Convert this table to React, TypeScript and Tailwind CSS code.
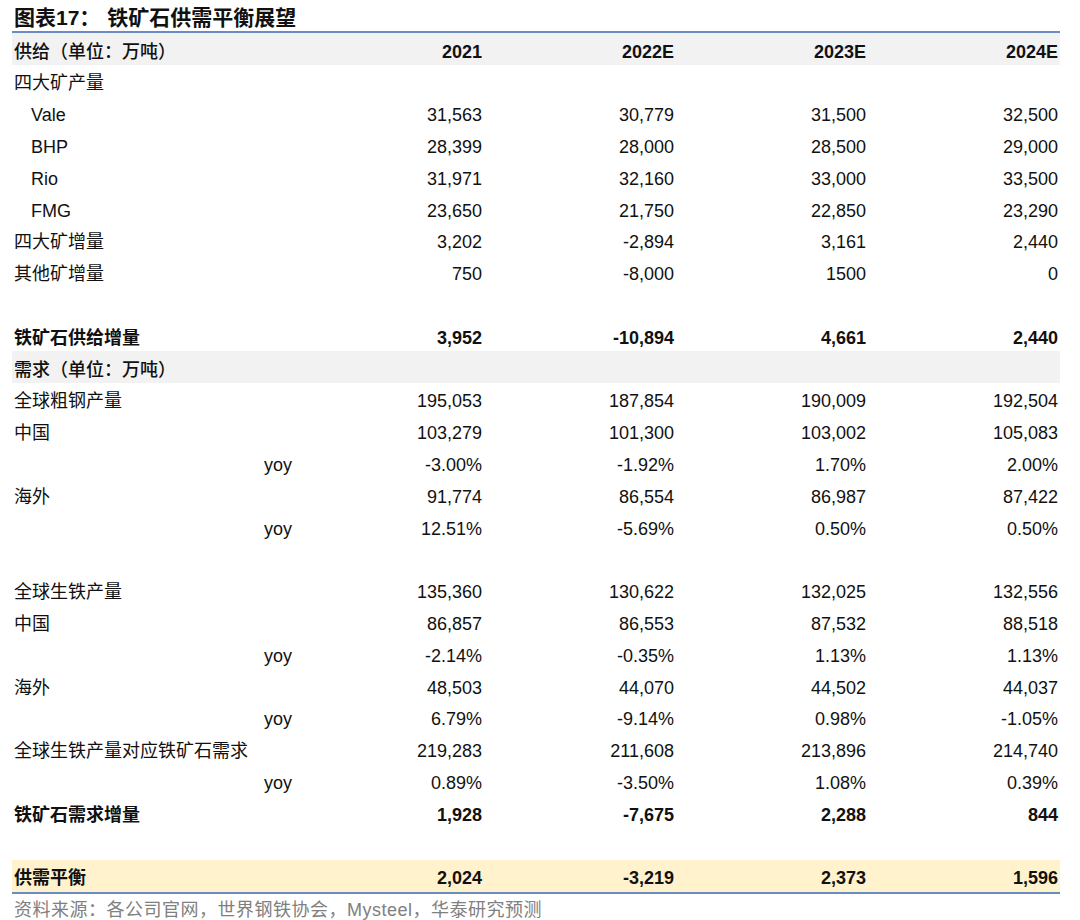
import React from 'react';

type Row = {
  label: string;
  vals?: string[];
  kind?: 'indent' | 'yoy';
  bold?: boolean;
  band?: 'gray' | 'yellow';
};

const rows: Row[] = [
  { label: '四大矿产量' },
  { label: 'Vale', kind: 'indent', vals: ['31,563', '30,779', '31,500', '32,500'] },
  { label: 'BHP', kind: 'indent', vals: ['28,399', '28,000', '28,500', '29,000'] },
  { label: 'Rio', kind: 'indent', vals: ['31,971', '32,160', '33,000', '33,500'] },
  { label: 'FMG', kind: 'indent', vals: ['23,650', '21,750', '22,850', '23,290'] },
  { label: '四大矿增量', vals: ['3,202', '-2,894', '3,161', '2,440'] },
  { label: '其他矿增量', vals: ['750', '-8,000', '1500', '0'] },
  { label: '' },
  { label: '铁矿石供给增量', bold: true, vals: ['3,952', '-10,894', '4,661', '2,440'] },
  { label: '需求（单位：万吨）', band: 'gray' },
  { label: '全球粗钢产量', vals: ['195,053', '187,854', '190,009', '192,504'] },
  { label: '中国', vals: ['103,279', '101,300', '103,002', '105,083'] },
  { label: 'yoy', kind: 'yoy', vals: ['-3.00%', '-1.92%', '1.70%', '2.00%'] },
  { label: '海外', vals: ['91,774', '86,554', '86,987', '87,422'] },
  { label: 'yoy', kind: 'yoy', vals: ['12.51%', '-5.69%', '0.50%', '0.50%'] },
  { label: '' },
  { label: '全球生铁产量', vals: ['135,360', '130,622', '132,025', '132,556'] },
  { label: '中国', vals: ['86,857', '86,553', '87,532', '88,518'] },
  { label: 'yoy', kind: 'yoy', vals: ['-2.14%', '-0.35%', '1.13%', '1.13%'] },
  { label: '海外', vals: ['48,503', '44,070', '44,502', '44,037'] },
  { label: 'yoy', kind: 'yoy', vals: ['6.79%', '-9.14%', '0.98%', '-1.05%'] },
  { label: '全球生铁产量对应铁矿石需求', vals: ['219,283', '211,608', '213,896', '214,740'] },
  { label: 'yoy', kind: 'yoy', vals: ['0.89%', '-3.50%', '1.08%', '0.39%'] },
  { label: '铁矿石需求增量', bold: true, vals: ['1,928', '-7,675', '2,288', '844'] },
  { label: '' },
];

function TableRow({ row, tall, labelWeight }: { row: Row; tall?: boolean; labelWeight?: string }) {
  const bg =
    row.band === 'gray' ? 'bg-[#f2f2f2]' : row.band === 'yellow' ? 'bg-[#fff2cc]' : '';
  const labelPad =
    row.kind === 'indent' ? 'pl-[19px]' : row.kind === 'yoy' ? 'justify-end pr-0' : 'pl-[2px]';
  return (
    <div
      className={`grid grid-cols-[280px_repeat(4,192px)] ${tall ? 'h-[32px]' : 'h-[31.8px]'} ${bg} ${
        row.bold ? 'font-bold' : ''
      }`}
    >
      <div className={`flex items-center pt-[5px] ${labelPad} ${labelWeight ?? ''} whitespace-nowrap`}>
        {row.label}
      </div>
      {[0, 1, 2, 3].map((i) => (
        <div key={i} className="flex items-center justify-end pt-[5px] pr-[2px]">
          {row.vals ? row.vals[i] : ''}
        </div>
      ))}
    </div>
  );
}

export default function App() {
  return (
    <div
      className="w-[1080px] h-[920px] bg-white text-[#111] text-[18px] leading-none [text-spacing-trim:space-all]"
      style={{ fontFamily: '"Liberation Sans", "Noto Sans CJK SC", sans-serif' }}
    >
      <div className="ml-[12px] w-[1048px]">
        <div className="h-[31px] flex items-center pl-[2px] pt-[3px] text-[21px] font-bold">
          <span>图表17：</span>
          <span className="ml-[7px]">铁矿石供需平衡展望</span>
        </div>
        <div className="h-[2px] bg-[#6a8cc2]" />
        <TableRow
          tall
          labelWeight="font-medium"
          row={{ label: '供给（单位：万吨）', band: 'gray', bold: true, vals: ['2021', '2022E', '2023E', '2024E'] }}
        />
        {rows.map((r, i) => (
          <TableRow key={i} row={r} labelWeight={r.band === 'gray' ? 'font-medium' : undefined} />
        ))}
        <TableRow tall row={{ label: '供需平衡', band: 'yellow', bold: true, vals: ['2,024', '-3,219', '2,373', '1,596'] }} />
        <div className="h-[2px] bg-[#6a8cc2]" />
        <div className="pl-[2px] pt-[7px] text-[18px] tracking-[0.5px] text-[#808080]">
          资料来源：各公司官网，世界钢铁协会，Mysteel，华泰研究预测
        </div>
      </div>
    </div>
  );
}
